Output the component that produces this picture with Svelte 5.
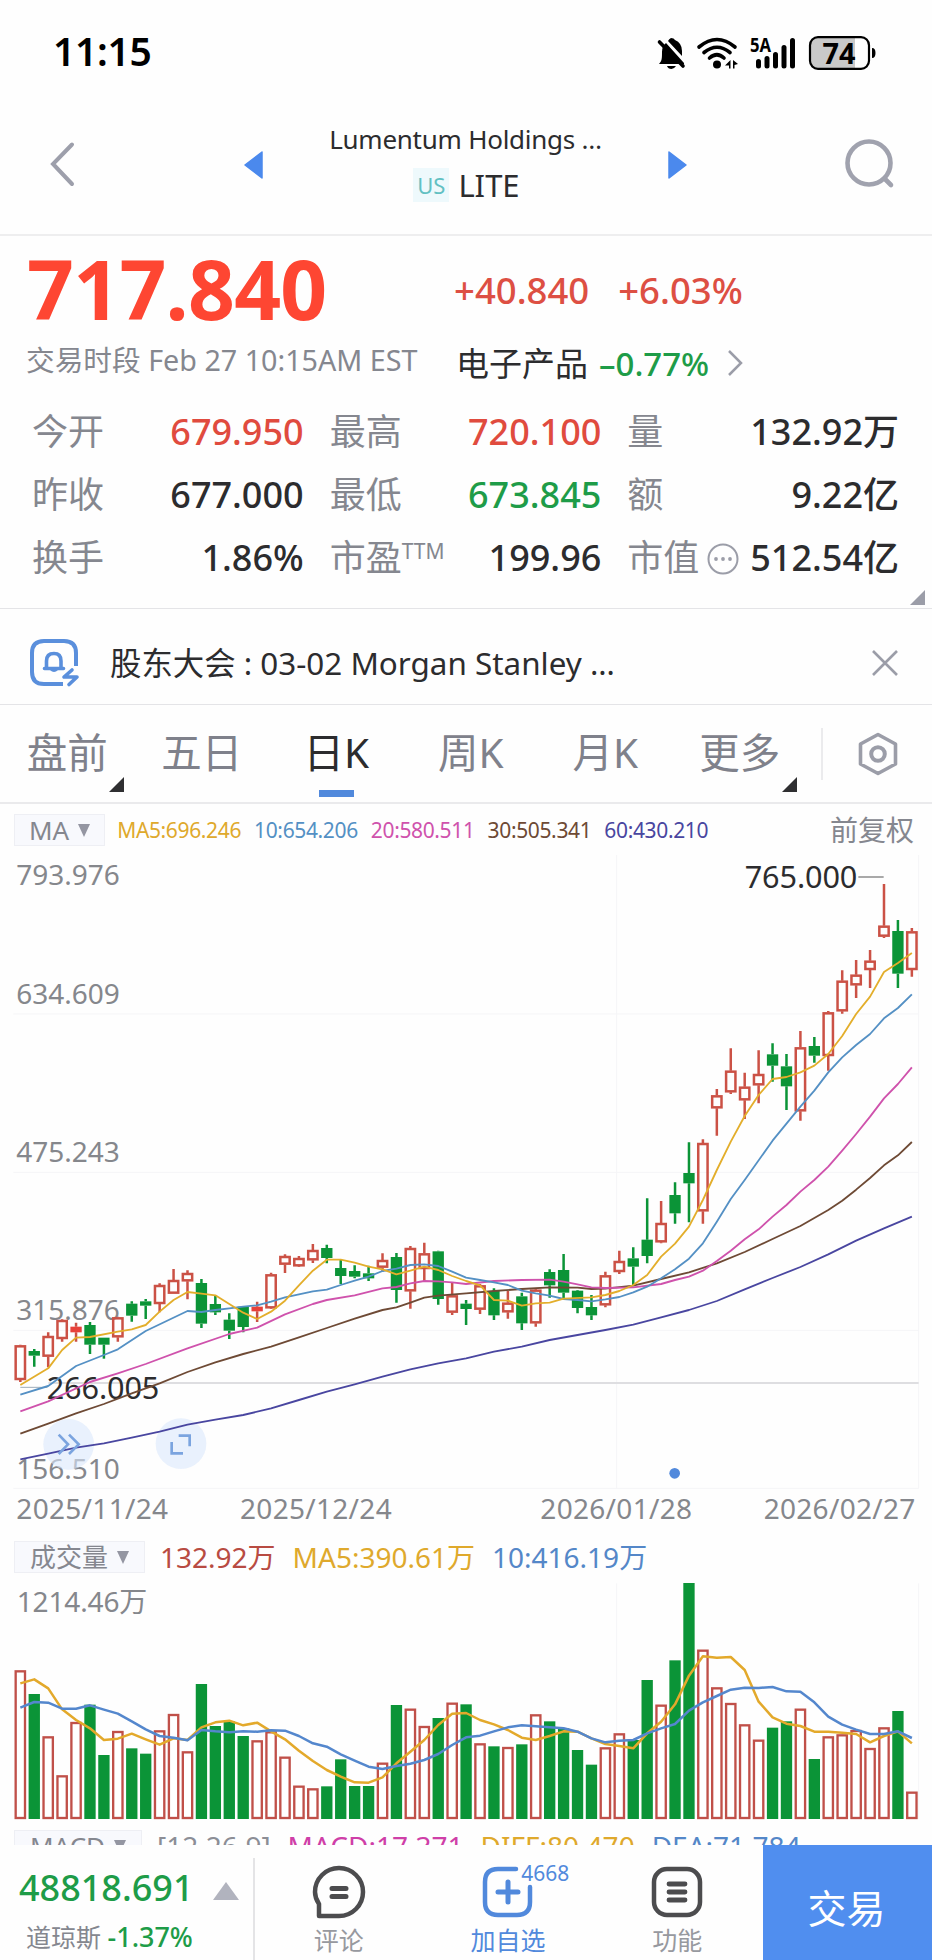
<script lang="ts">
  type Candle = [string, number, number, number, number];

  const stats = [
    { label: "今开", value: "679.950", tone: "up" },
    { label: "最高", value: "720.100", tone: "up" },
    { label: "量", value: "132.92万", tone: "" },
    { label: "昨收", value: "677.000", tone: "" },
    { label: "最低", value: "673.845", tone: "down" },
    { label: "额", value: "9.22亿", tone: "" },
    { label: "换手", value: "1.86%", tone: "" },
    { label: "市盈", sup: "TTM", value: "199.96", tone: "" },
    { label: "市值", more: true, value: "512.54亿", tone: "" },
  ];

  const tabs = [
    { name: "盘前", corner: true },
    { name: "五日" },
    { name: "日K", active: true },
    { name: "周K" },
    { name: "月K" },
    { name: "更多", corner: true },
  ];

  // chart space is 3 units per css pixel
  const STEP = 41.79;
  const cx = (i: number) => 61 + STEP * i;

  // kind, high, body top, body bottom, low ("f" is a filled red body)
  const candles: Candle[] = [
    ["r", 1484, 1486, 1590, 1596],
    ["g", 1497, 1503, 1517, 1550],
    ["r", 1447, 1458, 1520, 1552],
    ["r", 1408, 1410, 1467, 1475],
    ["f", 1418, 1430, 1447, 1475],
    ["g", 1416, 1425, 1484, 1512],
    ["g", 1463, 1463, 1484, 1526],
    ["r", 1400, 1402, 1462, 1475],
    ["g", 1354, 1361, 1397, 1415],
    ["g", 1347, 1354, 1367, 1407],
    ["r", 1300, 1305, 1362, 1387],
    ["r", 1257, 1290, 1331, 1331],
    ["r", 1261, 1269, 1294, 1348],
    ["g", 1287, 1299, 1421, 1434],
    ["g", 1337, 1362, 1387, 1395],
    ["g", 1390, 1409, 1442, 1467],
    ["g", 1368, 1370, 1431, 1447],
    ["f", 1355, 1370, 1384, 1416],
    ["r", 1268, 1273, 1375, 1377],
    ["r", 1213, 1218, 1244, 1269],
    ["r", 1218, 1224, 1249, 1251],
    ["r", 1182, 1200, 1231, 1239],
    ["g", 1184, 1194, 1224, 1240],
    ["g", 1227, 1254, 1278, 1302],
    ["g", 1246, 1263, 1280, 1285],
    ["g", 1247, 1270, 1285, 1293],
    ["r", 1210, 1230, 1253, 1265],
    ["g", 1209, 1221, 1320, 1358],
    ["r", 1188, 1194, 1324, 1376],
    ["r", 1178, 1210, 1257, 1293],
    ["g", 1202, 1204, 1347, 1364],
    ["r", 1297, 1336, 1388, 1395],
    ["g", 1350, 1361, 1377, 1425],
    ["r", 1302, 1306, 1379, 1392],
    ["g", 1315, 1323, 1396, 1410],
    ["r", 1323, 1358, 1387, 1406],
    ["g", 1328, 1339, 1420, 1440],
    ["r", 1315, 1319, 1420, 1430],
    ["g", 1258, 1266, 1306, 1343],
    ["g", 1212, 1260, 1328, 1345],
    ["g", 1320, 1322, 1374, 1390],
    ["g", 1335, 1371, 1396, 1410],
    ["r", 1265, 1276, 1366, 1372],
    ["r", 1202, 1233, 1266, 1272],
    ["g", 1192, 1225, 1250, 1305],
    ["g", 1045, 1169, 1218, 1240],
    ["r", 1053, 1119, 1177, 1180],
    ["g", 997, 1035, 1090, 1121],
    ["g", 877, 969, 1000, 1117],
    ["r", 868, 879, 1084, 1121],
    ["r", 717, 736, 775, 857],
    ["r", 595, 662, 727, 732],
    ["r", 668, 710, 751, 807],
    ["r", 601, 672, 706, 760],
    ["g", 580, 613, 647, 695],
    ["g", 612, 649, 709, 780],
    ["r", 543, 592, 784, 812],
    ["g", 561, 588, 617, 638],
    ["r", 483, 487, 618, 662],
    ["r", 361, 392, 484, 491],
    ["r", 330, 374, 406, 444],
    ["r", 300, 332, 360, 414],
    ["r", 102, 227, 260, 264],
    ["g", 210, 243, 371, 414],
    ["r", 234, 244, 360, 380],
  ];

  const averages = [
    {
      color: "#4946a0",
      points: [[0, 1828], [2, 1811], [4, 1793], [6, 1780], [8, 1763], [10, 1745], [12, 1724], [14, 1709], [16, 1695], [18, 1675], [20, 1650], [22, 1625], [24, 1603], [26, 1580], [28, 1558], [30, 1540], [32, 1525], [34, 1505], [36, 1490], [38, 1470], [40, 1455], [42, 1440], [44, 1424], [46, 1402], [48, 1380], [50, 1353], [52, 1318], [54, 1284], [56, 1251], [58, 1213], [60, 1172], [62, 1135], [64, 1100]],
    },
    {
      color: "#6e4a35",
      points: [[0, 1751], [2, 1721], [4, 1690], [6, 1662], [8, 1630], [10, 1600], [12, 1566], [14, 1537], [16, 1512], [18, 1490], [20, 1462], [22, 1434], [24, 1406], [26, 1380], [27, 1372], [28, 1358], [29, 1343], [30, 1337], [32, 1330], [34, 1323], [36, 1317], [38, 1312], [40, 1313], [41, 1317], [42, 1316], [44, 1307], [46, 1287], [48, 1267], [50, 1240], [52, 1206], [54, 1167], [56, 1128], [58, 1080], [59, 1052], [60, 1019], [61, 984], [62, 946], [63, 916], [64, 876]],
    },
    {
      color: "#cf52ac",
      points: [[0, 1684], [2, 1654], [5, 1596], [7, 1570], [9, 1542], [12, 1495], [15, 1452], [17, 1433], [19, 1393], [21, 1362], [22, 1350], [24, 1336], [26, 1315], [27, 1311], [28, 1300], [29, 1293], [30, 1294], [31, 1297], [32, 1302], [34, 1293], [36, 1290], [38, 1289], [39, 1295], [40, 1303], [41, 1312], [42, 1314], [44, 1312], [46, 1302], [47, 1290], [48, 1280], [49, 1262], [50, 1233], [51, 1202], [52, 1168], [53, 1138], [54, 1100], [55, 1065], [56, 1025], [57, 990], [58, 950], [59, 902], [60, 852], [61, 800], [62, 745], [63, 702], [64, 652]],
    },
    {
      color: "#5490c4",
      points: [[0, 1634], [2, 1608], [4, 1548], [6, 1515], [7, 1498], [9, 1443], [12, 1383], [13, 1386], [14, 1380], [15, 1375], [16, 1370], [17, 1366], [18, 1355], [19, 1342], [20, 1333], [21, 1324], [22, 1319], [23, 1305], [24, 1292], [25, 1280], [26, 1263], [27, 1256], [28, 1245], [29, 1243], [30, 1248], [31, 1265], [32, 1283], [33, 1290], [34, 1297], [35, 1305], [36, 1322], [37, 1330], [38, 1337], [39, 1347], [40, 1350], [41, 1354], [42, 1348], [43, 1341], [44, 1327], [45, 1310], [46, 1285], [47, 1258], [48, 1226], [49, 1180], [50, 1115], [51, 1047], [52, 990], [54, 872], [56, 770], [57, 722], [58, 667], [59, 622], [60, 585], [61, 552], [62, 505], [63, 474], [64, 433]],
    },
    {
      color: "#e3ae2b",
      points: [[0, 1605], [2, 1555], [3, 1500], [4, 1463], [5, 1461], [7, 1445], [8, 1438], [9, 1425], [10, 1385], [11, 1350], [12, 1326], [13, 1331], [14, 1336], [15, 1362], [16, 1388], [17, 1407], [18, 1385], [19, 1352], [20, 1306], [21, 1262], [22, 1229], [23, 1229], [24, 1238], [25, 1250], [26, 1258], [27, 1273], [28, 1262], [29, 1250], [30, 1260], [31, 1278], [32, 1293], [33, 1306], [34, 1350], [35, 1352], [36, 1367], [37, 1360], [38, 1358], [39, 1346], [41, 1342], [42, 1335], [43, 1323], [44, 1305], [45, 1275], [46, 1220], [47, 1181], [48, 1130], [49, 1050], [50, 960], [51, 875], [52, 798], [53, 735], [54, 687], [55, 681], [56, 667], [57, 647], [58, 612], [59, 558], [60, 492], [61, 440], [62, 366], [63, 339], [64, 309]],
    },
  ];

  const volumeTops = [451, 522, 649, 766, 606, 554, 705, 633, 685, 701, 631, 582, 694, 492, 618, 604, 648, 661, 634, 710, 797, 805, 799, 718, 798, 798, 728, 555, 566, 618, 594, 548, 553, 670, 679, 681, 673, 583, 604, 625, 690, 734, 682, 640, 660, 480, 554, 421, 189, 389, 502, 549, 613, 659, 623, 604, 566, 717, 649, 643, 630, 684, 622, 573, 815];
  const volumeBase = 897;

  const volume5 = [490, 478, 505, 568, 600, 625, 660, 656, 641, 658, 674, 655, 660, 622, 607, 602, 616, 608, 634, 658, 692, 723, 750, 770, 787, 788, 772, 730, 695, 660, 615, 581, 579, 600, 613, 630, 653, 660, 648, 634, 635, 655, 672, 678, 685, 640, 605, 553, 467, 409, 413, 411, 450, 545, 592, 611, 618, 635, 635, 638, 642, 667, 648, 634, 670];
  const volume10 = [563, 546, 548, 566, 566, 556, 569, 581, 604, 628, 648, 653, 661, 630, 634, 637, 634, 635, 631, 632, 648, 670, 680, 703, 722, 740, 747, 738, 731, 720, 702, 675, 652, 647, 634, 622, 616, 619, 622, 625, 635, 655, 667, 662, 660, 640, 625, 612, 572, 547, 528, 509, 503, 504, 501, 514, 515, 547, 590, 614, 629, 642, 642, 634, 654];

  const path = (points: number[][]) =>
    points.map(([i, y]) => `${cx(i).toFixed(1)},${y}`).join(" ");
  const series = (values: number[]) => path(values.map((y, i) => [i, y]));

  const priceLabels = [
    ["793.976", 106],
    ["634.609", 463],
    ["475.243", 937],
    ["315.876", 1411],
    ["156.510", 1886],
  ] as [string, number][];
  const dates = [
    ["2025/11/24", 49],
    ["2025/12/24", 720],
    ["2026/01/28", 1621],
    ["2026/02/27", 2291],
  ] as [string, number][];
</script>

<div class="screen">
  <div class="status">
    <span class="clock">11:15</span>
    <div class="status-icons">
      <svg class="bell" width="28" height="32" viewBox="0 0 28 32">
        <path d="M2 27 C5 24 5 21 5 15 Q5 9 9 6 L27 26 V27 Z" />
        <path d="M11 4 Q12 2 14 1 Q17 1 18 3 Q25 6 25 14 V19 Z" />
        <path d="M10 29 H19 Q17 32 14.500 32 Q11 32 10 29Z" />
        <path d="M2.500 5 L26 29" stroke="#000" stroke-width="3.600" stroke-linecap="round" />
      </svg>
      <svg class="wifi" width="42" height="32" viewBox="0 0 42 32" fill="none" stroke="#000" stroke-width="3.600" stroke-linecap="round">
        <path d="M2 10 Q20 -5 38 10" />
        <path d="M7 15.500 Q20 5 33 15.500" />
        <path d="M12.500 21 Q20 14.500 27 21" />
        <circle cx="20" cy="27.500" r="4" fill="#000" stroke="none" />
        <path d="M33.500 23 V31.500 H32 V28.500 H28Z M36 23 L41 27 L37.500 28 V31.500 H36Z" fill="#000" stroke="none" />
      </svg>
      <svg class="signal" width="46" height="32" viewBox="0 0 46 32">
        <text x="0" y="15" font-size="20" font-weight="700" textLength="21" lengthAdjust="spacingAndGlyphs">5A</text>
        <rect x="6" y="22" width="5" height="9.500" rx="2.500" />
        <rect x="14.500" y="19" width="5" height="12.500" rx="2.500" />
        <rect x="23" y="15" width="5" height="16.500" rx="2.500" />
        <rect x="31.500" y="8" width="5" height="23.500" rx="2.500" />
        <rect x="40" y="1" width="5" height="30.500" rx="2.500" />
      </svg>
      <svg width="67" height="34" viewBox="0 0 67 34">
        <path d="M10 2 H46 V32 H10 Q2 32 2 24 V10 Q2 2 10 2Z" fill="#c9c9c9" />
        <rect x="1" y="1.200" width="59" height="31.600" rx="8" fill="none" stroke="#000" stroke-width="2.200" />
        <path d="M63 12 Q66.500 12 66.500 17 Q66.500 22 63 22Z" />
        <text x="13.500" y="27.500" font-size="29" font-weight="700" textLength="33" lengthAdjust="spacingAndGlyphs">74</text>
      </svg>
    </div>
  </div>

  <header>
    <svg width="25" height="48" viewBox="0 0 25 48" fill="none" stroke="#9d9fab" stroke-width="4" stroke-linecap="round">
      <path d="M22 4.500 L3 24 L22 44" />
    </svg>
    <div class="stepper">
      <svg width="20" height="28" viewBox="0 0 20 28"><path d="M1 14 L18 1 V27Z" fill="#4b89ed" stroke="#4b89ed" stroke-width="1.500" stroke-linejoin="round" /></svg>
      <div class="title">
        <div class="company">Lumentum Holdings …</div>
        <div class="ticker"><span class="market">US</span>LITE</div>
      </div>
      <svg width="20" height="28" viewBox="0 0 20 28"><path d="M19 14 L2 1 V27Z" fill="#4b89ed" stroke="#4b89ed" stroke-width="1.500" stroke-linejoin="round" /></svg>
    </div>
    <svg width="50" height="50" viewBox="0 0 50 50" fill="none" stroke="#a0a2ae" stroke-width="4.600" stroke-linecap="round">
      <circle cx="24" cy="24" r="21.500" />
      <path d="M40 40 L46 46" />
    </svg>
  </header>

  <section class="quote">
    <div class="price-row">
      <span class="price">717.840</span>
      <span class="change">+40.840</span>
      <span class="change">+6.03%</span>
    </div>
    <div class="session-row">
      <span class="session">交易时段 Feb 27 10:15AM EST</span>
      <span class="sector">电子产品</span>
      <span class="sector-change down">–0.77%</span>
      <svg width="16" height="28" viewBox="0 0 16 28" fill="none" stroke="#9b9da8" stroke-width="2.500"><path d="M2 2 L14 14 L2 26" /></svg>
    </div>
    <div class="stats">
      {#each stats as stat}
        <div class="stat">
          <span class="stat-label">{stat.label}{#if stat.sup}<sup>{stat.sup}</sup>{/if}</span>
          {#if stat.more}
            <svg width="32" height="32" viewBox="0 0 32 32" fill="#9b9da8">
              <circle cx="16" cy="16" r="14.500" fill="none" stroke="#9b9da8" stroke-width="2" />
              <circle cx="9" cy="16" r="1.900" /><circle cx="16" cy="16" r="1.900" /><circle cx="23" cy="16" r="1.900" />
            </svg>
          {/if}
          <span class="stat-value {stat.tone}">{stat.value}</span>
        </div>
      {/each}
    </div>
    <i class="corner"></i>
  </section>

  <section class="notice">
    <svg width="50" height="48" viewBox="0 0 50 48" fill="none" stroke="#5a8fdc" stroke-width="4" stroke-linecap="round" stroke-linejoin="round">
      <path d="M46 27 V14 Q46 2 34 2 H14 Q2 2 2 14 V33 Q2 45 14 45 H33" stroke-linecap="butt" />
      <path d="M16.500 29 V22 Q16.500 14.500 24 14.500 Q31 14.500 31 22 V29 M14.500 29.500 H33.500" stroke-width="3.600" />
      <path d="M20 31 H28 Q24 35 20 31Z" fill="#5a8fdc" stroke="none" />
      <path d="M42 31 L34 38 L47 38 L39 45.500" stroke-width="3.600" />
    </svg>
    <span class="notice-text">股东大会 : 03-02 Morgan Stanley …</span>
    <svg width="28" height="28" viewBox="0 0 28 28" stroke="#9b9da8" stroke-width="2.600"><path d="M2 2 L26 26 M26 2 L2 26" /></svg>
  </section>

  <nav class="tabs">
    {#each tabs as tab}
      <div class="tab" class:active={tab.active}>
        {tab.name}
        {#if tab.corner}<i class="corner"></i>{/if}
      </div>
    {/each}
    <i class="divider"></i>
    <svg width="40" height="44" viewBox="0 0 40 44" fill="none" stroke="#9b9da8" stroke-width="3.600" stroke-linejoin="round">
      <path d="M20 2.500 L37.500 12 V32 L20 41.500 L2.500 32 V12Z" />
      <circle cx="20" cy="22" r="6.800" stroke-width="4" />
    </svg>
  </nav>

  <div class="legend">
    <span class="chip">MA<i></i></span>
    <span class="ma" style:color="#dfa92c">MA5:696.246</span>
    <span class="ma" style:color="#5490c4">10:654.206</span>
    <span class="ma" style:color="#cf52ac">20:580.511</span>
    <span class="ma" style:color="#6e4a35">30:505.341</span>
    <span class="ma" style:color="#4946a0">60:430.210</span>
    <span class="adjust">前复权</span>
  </div>

  <svg class="chart" width="932" height="680" viewBox="0 0 2796 2040">
    <g stroke="#f5f5f7" stroke-width="3">
      <path d="M40 492 H2756 M40 967 H2756 M40 1441 H2756 M40 1915 H2756" />
      <path d="M1850 15 V1915 M2756 15 V1915" />
    </g>
    <path d="M145 1599 H2756" stroke="#dedee1" stroke-width="6" />
    {#each priceLabels as [text, y]}
      <text x="49" {y} class="axis" textLength="310">{text}</text>
    {/each}
    {#each dates as [text, x]}
      <text {x} y="2006" class="axis" textLength="455">{text}</text>
    {/each}

    {#each candles as [kind, high, top, bottom, low], i}
      {@const color = kind === "g" ? "#0b9437" : "#cb5145"}
      <path d="M{cx(i)} {high} V{top} M{cx(i)} {bottom} V{low}" stroke={color} stroke-width="7.5" />
      {#if kind === "r"}
        <rect x={cx(i) - 14} y={top + 3} width="28" height={bottom - top - 6} fill="none" stroke={color} stroke-width="7.5" />
      {:else}
        <rect x={cx(i) - 17} y={top} width="34" height={bottom - top} fill={kind === "f" ? "#e8413a" : color} />
      {/if}
    {/each}

    <text x="2234" y="113" class="mark" textLength="338">765.000</text>
    <path d="M2575 81 H2651" stroke="#555" stroke-width="3" />
    <text x="140" y="1646" class="mark" textLength="338">266.005</text>
    <path d="M61 1612 H142" stroke="#9dabb8" stroke-width="3" />

    <g fill="#dbe8fb" fill-opacity=".6">
      <circle cx="206" cy="1783" r="76" />
      <circle cx="543" cy="1781" r="76" />
    </g>
    {#each averages as line}
      <polyline points={path(line.points)} fill="none" stroke={line.color} stroke-width="5.500" stroke-linejoin="round" />
    {/each}
    <g fill="none" stroke="#7ba4df" stroke-width="8">
      <path d="M176 1754 L204 1783 L176 1812 M207 1754 L236 1783 L207 1812" />
      <path d="M536 1757 H569 V1789 M515 1776 V1810 H549" />
    </g>
    <circle cx="2024" cy="1870" r="16" fill="#5189dc" />
  </svg>

  <div class="legend volume-legend">
    <span class="chip">成交量<i></i></span>
    <span class="vol" style:color="#b84b42">132.92万</span>
    <span class="vol" style:color="#dfa92c">MA5:390.61万</span>
    <span class="vol" style:color="#5487c8">10:416.19万</span>
  </div>

  <svg class="volume" width="932" height="240" viewBox="0 180 2796 720">
    <path d="M1850 190 V897 M2756 190 V897" stroke="#f5f5f7" stroke-width="3" />
    <text x="50" y="277" class="axis" textLength="392">1214.46万</text>
    {#each volumeTops as top, i}
      {#if candles[i][0] === "g"}
        <rect x={cx(i) - 17} y={top} width="34" height={volumeBase - top} fill="#0b9437" />
      {:else}
        <rect x={cx(i) - 14} y={top + 3} width="28" height={volumeBase - top - 6} fill="#fff" stroke="#c05049" stroke-width="7" />
      {/if}
    {/each}
    <polyline points={series(volume5)} fill="none" stroke="#e3a92b" stroke-width="7.500" stroke-linejoin="round" />
    <polyline points={series(volume10)} fill="none" stroke="#5487cd" stroke-width="7.500" stroke-linejoin="round" />
  </svg>

  <div class="macd">
    <div class="legend">
      <span class="chip">MACD<i></i></span>
      <span class="vol" style:color="#8c8e96">[12,26,9]</span>
      <span class="vol" style:color="#cf3fa8">MACD:17.371</span>
      <span class="vol" style:color="#dfa92c">DIFF:80.470</span>
      <span class="vol" style:color="#5487c8">DEA:71.784</span>
    </div>
  </div>

  <footer>
    <div class="index">
      <div>
        <div class="index-value">48818.691</div>
        <div class="index-name">道琼斯 <b>-1.37%</b></div>
      </div>
      <svg width="26" height="18" viewBox="0 0 26 18"><path d="M13 0 L26 18 H0Z" fill="#b1b3be" /></svg>
    </div>
    <div class="action">
      <svg width="54" height="54" viewBox="0 0 54 54" fill="none" stroke="#4c4c4e" stroke-width="4.500" stroke-linecap="round" stroke-linejoin="round">
        <path d="M27 51 A24 24 0 1 0 3 27 Q3 33 7 39 V51Z" />
        <path d="M20 23.500 H34 M20 31.500 H34" stroke-width="5" />
      </svg>
      <span>评论</span>
    </div>
    <div class="action primary">
      <svg width="54" height="54" viewBox="0 0 54 54" fill="none" stroke="#5189dc" stroke-width="4.500" stroke-linecap="round">
        <path d="M35 4 H17 Q4 4 4 17 V37 Q4 50 17 50 H36 Q49 50 49 37 V22" />
        <path d="M17 27 H37 M27 17 V37" stroke-width="5" />
      </svg>
      <span>加自选</span>
      <em>4668</em>
    </div>
    <div class="action">
      <svg width="54" height="54" viewBox="0 0 54 54" fill="none" stroke="#4c4c4e" stroke-width="4.500" stroke-linecap="round">
        <rect x="4" y="4" width="46" height="46" rx="13" />
        <path d="M19 19 H35 M19 27 H35 M19 35 H35" stroke-width="4.800" />
      </svg>
      <span>功能</span>
    </div>
    <button>交易</button>
  </footer>
</div>

<style>
  :global(body) {
    background: #fefefe;
  }
  .screen {
    width: 932px;
    height: 1960px;
    overflow: hidden;
    display: flex;
    flex-direction: column;
    background: #fefefe;
    color: #2c2c2e;
    font-family: "Noto Sans", "Noto Sans CJK SC", sans-serif;
    line-height: 1;
    white-space: nowrap;
  }
  .screen > * {
    flex: none;
  }
  svg {
    display: block;
    flex: none;
    overflow: visible;
  }
  .up {
    color: #e04b3e;
  }
  .down {
    color: #1e9c48;
  }
  .corner {
    position: absolute;
    border-style: solid;
    border-width: 0 0 15px 15px;
    border-color: transparent transparent #2f2f31;
  }

  /* status bar and header */
  .status {
    height: 104px;
    box-sizing: border-box;
    padding: 0 56px 0 53px;
    display: flex;
    align-items: center;
    justify-content: space-between;
    color: #000;
  }
  .clock {
    margin-top: -3px;
    font-size: 39px;
    font-weight: 600;
    letter-spacing: -0.3px;
  }
  .status-icons {
    display: flex;
    align-items: center;
    padding-top: 1px;
  }
  .bell {
    margin-right: 12px;
  }
  .wifi {
    margin-right: 11px;
  }
  .signal {
    margin-right: 13px;
  }
  header {
    height: 130px;
    border-bottom: 2px solid #eeeeef;
    padding: 0 37px 0 50px;
    display: flex;
    align-items: center;
  }
  header > svg {
    margin-top: -11px;
  }
  .stepper {
    width: 443px;
    margin: 0 auto 0 169px;
    display: flex;
    align-items: center;
    justify-content: space-between;
  }
  .title {
    margin-top: -13px;
    text-align: center;
  }
  .company {
    font-size: 26px;
    letter-spacing: -0.25px;
    line-height: 34px;
  }
  .ticker {
    display: flex;
    align-items: center;
    justify-content: center;
    margin-top: 11px;
    padding-left: 2px;
    font-size: 31px;
    line-height: 36px;
  }
  .market {
    width: 36px;
    height: 34px;
    line-height: 34px;
    margin-right: 9px;
    background: #eef9fc;
    color: #62c0c2;
    font-size: 22px;
  }
  .stepper svg {
    margin-top: -9px;
  }

  /* quote */
  .quote {
    position: relative;
    height: 372px;
    border-bottom: 1px solid #e4e4e7;
  }
  .quote > .corner {
    right: 7px;
    bottom: 3px;
    border-bottom-color: #9b9da8;
  }
  .price-row {
    display: flex;
    align-items: center;
    height: 108px;
    padding-left: 27px;
  }
  .price {
    width: 427px;
    margin-top: -5px;
    font-size: 82px;
    font-weight: 700;
    letter-spacing: -0.7px;
    color: #fe4632;
  }
  .change {
    margin-right: 29px;
    font-size: 36.5px;
    font-weight: 500;
    color: #dd4f43;
  }
  .session-row {
    display: flex;
    align-items: center;
    height: 38px;
    padding-left: 26px;
  }
  .session {
    width: 430px;
    margin-top: -5px;
    font-size: 28.7px;
    color: #85878f;
  }
  .sector {
    width: 143px;
    font-size: 33px;
  }
  .sector-change {
    width: 128px;
    font-size: 33px;
    font-weight: 500;
  }
  .stats {
    display: grid;
    grid-template-columns: repeat(3, 1fr);
    column-gap: 26px;
    grid-auto-rows: 63px;
    padding: 18px 33px 0 32px;
  }
  .stat {
    display: flex;
    align-items: center;
    font-size: 36px;
  }
  .stat-label {
    color: #85878f;
  }
  .stat-label sup {
    font-size: 21px;
    line-height: 0;
    vertical-align: 12px;
  }
  .stat svg {
    margin: 2px 0 0 8px;
  }
  .stat-value {
    margin-left: auto;
    font-weight: 500;
    font-size: 36px;
  }

  /* notice */
  .notice {
    height: 96px;
    box-sizing: border-box;
    border-bottom: 1px solid #e4e4e7;
    padding: 12px 33px 0 30px;
    display: flex;
    align-items: center;
  }
  .notice-text {
    margin: 0 auto 0 30px;
    font-size: 31.4px;
  }

  /* period tabs */
  .tabs {
    height: 97px;
    border-bottom: 2px solid #eaeaec;
    padding: 0 34px 0 0;
    display: flex;
    align-items: center;
    font-size: 40.5px;
    color: #7f818b;
  }
  .tab {
    position: relative;
    width: 134.5px;
    height: 97px;
    line-height: 96px;
    text-align: center;
  }
  .tab .corner {
    left: 109px;
    bottom: 10px;
  }
  .active {
    color: #2c2c2e;
  }
  .active::after {
    content: "";
    position: absolute;
    left: 50px;
    bottom: 5px;
    width: 35px;
    height: 7px;
    background: #5189dc;
  }
  .divider {
    width: 2px;
    height: 52px;
    margin-left: 14px;
    margin-right: auto;
    background: #ebebed;
  }

  /* indicator rows */
  .legend {
    display: flex;
    align-items: center;
    height: 32px;
    padding: 0 18px 0 14px;
  }
  .tabs + .legend {
    margin-top: 10px;
  }
  .chip {
    box-sizing: border-box;
    display: flex;
    align-items: center;
    height: 32px;
    padding: 0 15px;
    border: 1px solid #eeeff4;
    background: #f8f9fd;
    color: #85878f;
    font-size: 26px;
    margin-right: 15px;
  }
  .chip i {
    margin-left: 9px;
    border-style: solid;
    border-width: 13px 6.5px 0;
    border-color: #9496a2 transparent transparent;
  }
  .ma {
    margin-right: 13px;
    font-size: 21px;
    letter-spacing: -0.36px;
  }
  .tabs + .legend .chip {
    padding: 0 14px;
    margin-right: 12px;
  }
  .adjust {
    margin-left: auto;
    color: #85878f;
    font-size: 28px;
  }
  .volume-legend {
    margin-top: 11px;
  }
  .vol {
    margin-right: 17px;
    font-size: 28px;
  }
  .chart {
    margin-top: 4px;
  }
  .chart .axis,
  .volume .axis {
    font-size: 84px;
    fill: #85878c;
  }
  .chart .mark {
    font-size: 92px;
    fill: #2c2c2e;
  }
  .volume {
    margin-top: 7px;
  }
  .macd {
    height: 15px;
    margin-top: 10px;
    overflow: hidden;
  }

  /* bottom bar */
  footer {
    height: 115px;
    display: flex;
  }
  .index {
    width: 255px;
    box-sizing: border-box;
    margin-top: 13px;
    padding: 11px 14px 0 19px;
    border-right: 2px solid #e4e4e6;
    display: flex;
    justify-content: space-between;
  }
  .index svg {
    margin-top: 13px;
  }
  .index-value {
    font-size: 36px;
    font-weight: 500;
    color: #1e9c48;
    line-height: 38px;
  }
  .index-name {
    margin: 16px 0 0 7px;
    font-size: 25px;
    color: #85878f;
  }
  .index-name b {
    color: #1e9c48;
    font-size: 27px;
    font-weight: 500;
  }
  .action {
    position: relative;
    width: 169.3px;
    display: flex;
    flex-direction: column;
    align-items: center;
    padding: 20px 2px 0 0;
    box-sizing: border-box;
    font-size: 25px;
    color: #97999f;
  }
  .action span {
    margin-top: 9px;
  }
  .primary {
    color: #5189dc;
  }
  .primary em {
    position: absolute;
    left: 97px;
    top: 18px;
    font-size: 21px;
    font-style: normal;
  }
  button {
    flex: 1;
    border: 0;
    padding: 10px 2px 0 0;
    background: #508eef;
    color: #fff;
    font: inherit;
    font-size: 39px;
  }
</style>
